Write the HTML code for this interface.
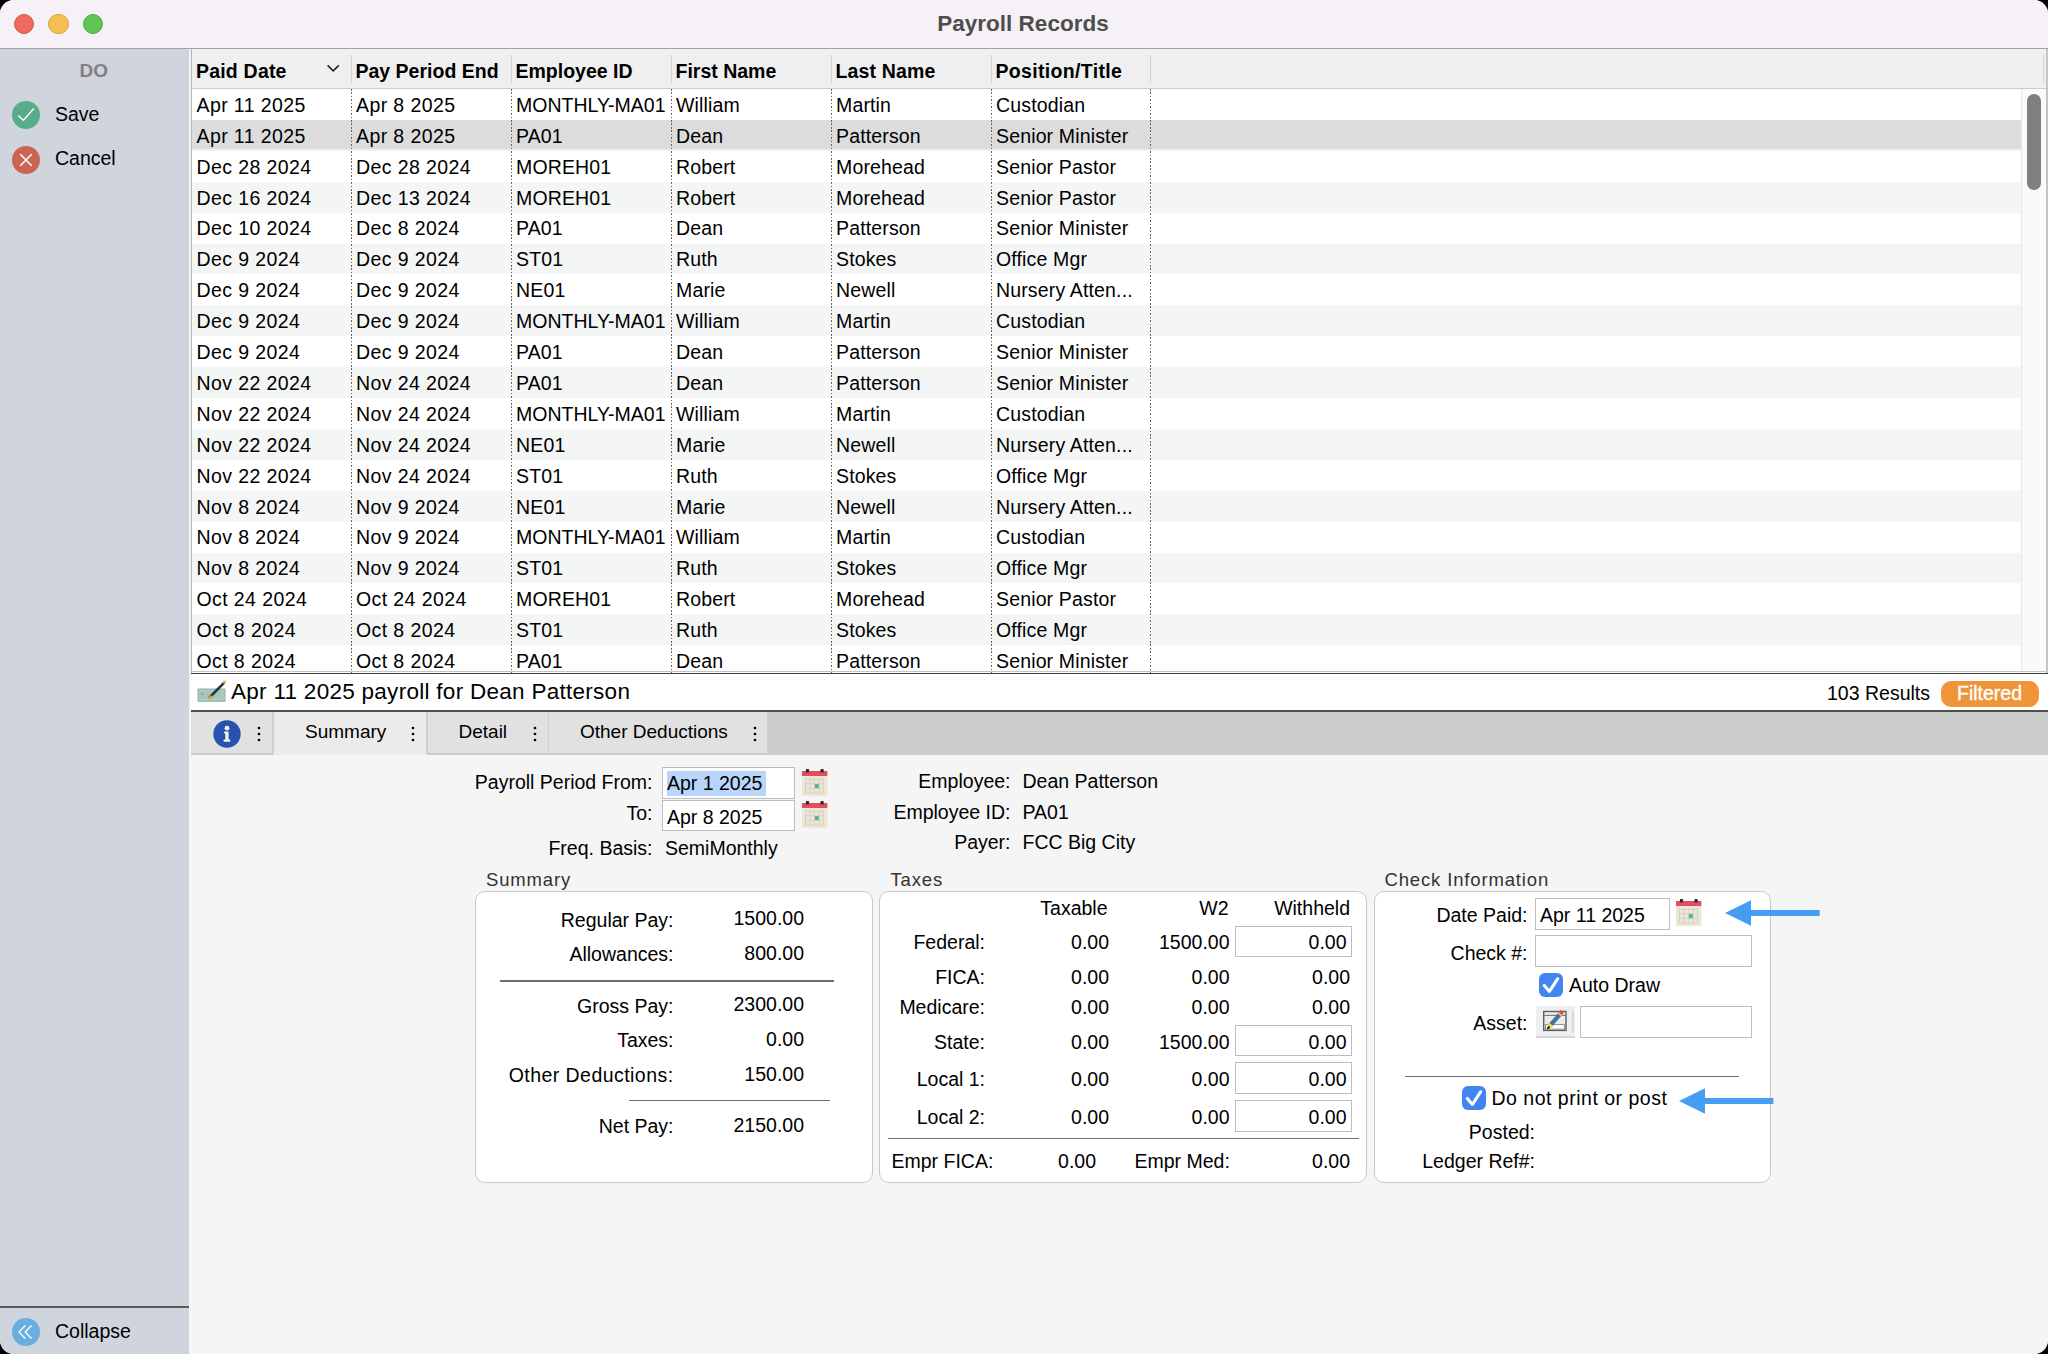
<!DOCTYPE html>
<html><head><meta charset="utf-8"><title>Payroll Records</title>
<style>
html,body{margin:0;padding:0;background:#000;width:2048px;height:1354px;overflow:hidden}
#win{position:absolute;left:0;top:0;width:2048px;height:1354px;border-radius:14px;overflow:hidden;background:#f5f5f5}
#win div,#win svg{position:absolute}
.t{font-family:"Liberation Sans", sans-serif;line-height:1;white-space:pre}
</style></head><body><div id="win">
<div style="left:0px;top:0px;width:2048px;height:48px;background:#f6f1f6"></div>
<div style="left:0px;top:47.9px;width:2048px;height:1.7px;background:#a3a3a5"></div>
<div style="left:14.0px;top:13.8px;width:18.4px;height:18.4px;border-radius:50%;background:#ee6a5f;border:1px solid #d9564b"></div>
<div style="left:48.2px;top:13.8px;width:18.4px;height:18.4px;border-radius:50%;background:#f4be50;border:1px solid #dba43b"></div>
<div style="left:82.6px;top:13.8px;width:18.4px;height:18.4px;border-radius:50%;background:#61c554;border:1px solid #4fae43"></div>
<div class="t" style="left:523px;width:1000px;text-align:center;top:13.35px;font-size:22.5px;font-weight:700;color:#4d4d4d;">Payroll Records</div>
<div style="left:0px;top:49px;width:189px;height:1305px;background:#d0d4dd"></div>
<div class="t" style="left:-406.3px;width:1000px;text-align:center;top:61.12px;font-size:19px;font-weight:700;color:#808080;">DO</div>
<svg style="left:12px;top:101px" width="28" height="28" viewBox="0 0 28 28"><circle cx="14" cy="14" r="14" fill="#57ad8a"/><path d="M6.3 14.5 L11.5 19.3 L21.8 7.5" stroke="#fff" stroke-width="1.3" fill="none"/></svg>
<div class="t" style="left:55px;top:104.59px;font-size:19.5px;font-weight:400;color:#000;">Save</div>
<svg style="left:12px;top:146px" width="28" height="28" viewBox="0 0 28 28"><circle cx="14" cy="14" r="14" fill="#cd6453"/><path d="M8.3 8.3 L19.7 19.7 M19.7 8.3 L8.3 19.7" stroke="#fff" stroke-width="1.5" fill="none"/></svg>
<div class="t" style="left:55px;top:148.79px;font-size:19.5px;font-weight:400;color:#000;">Cancel</div>
<div style="left:0px;top:1305.5px;width:189px;height:2px;background:#58595c"></div>
<svg style="left:12px;top:1317.5px" width="28" height="28" viewBox="0 0 28 28"><circle cx="14" cy="14" r="14" fill="#6aaee0"/><path d="M13.3 7.5 L7 14 L13.3 20.5 M19.5 7.5 L13.2 14 L19.5 20.5" stroke="#fff" stroke-width="1.3" fill="none"/></svg>
<div class="t" style="left:55px;top:1322.39px;font-size:19.5px;font-weight:400;color:#000;">Collapse</div>
<div style="left:189px;top:49px;width:1859px;height:1305px;background:#f5f5f5"></div>
<div style="left:191px;top:49px;width:1856px;height:624px;background:#fff"></div>
<div style="left:191px;top:49px;width:1856px;height:39px;background:#efefef"></div>
<div style="left:191px;top:88px;width:1856px;height:1px;background:#cbcbcb"></div>
<div style="left:191px;top:49px;width:1px;height:624px;background:#b5b5b5"></div>
<div style="left:2046px;top:49px;width:2px;height:624px;background:#c4c4c4"></div>
<div style="left:351px;top:55px;width:1px;height:28px;background:#d2d2d2"></div>
<div style="left:511px;top:55px;width:1px;height:28px;background:#d2d2d2"></div>
<div style="left:671px;top:55px;width:1px;height:28px;background:#d2d2d2"></div>
<div style="left:831px;top:55px;width:1px;height:28px;background:#d2d2d2"></div>
<div style="left:991px;top:55px;width:1px;height:28px;background:#d2d2d2"></div>
<div style="left:1150px;top:55px;width:1px;height:28px;background:#d2d2d2"></div>
<div style="left:2043px;top:55px;width:1px;height:28px;background:#d2d2d2"></div>
<div class="t" style="left:196px;top:61.89px;font-size:19.5px;font-weight:700;color:#000;letter-spacing:0.2px;">Paid Date</div>
<div class="t" style="left:355.5px;top:61.89px;font-size:19.5px;font-weight:700;color:#000;">Pay Period End</div>
<div class="t" style="left:515.5px;top:61.89px;font-size:19.5px;font-weight:700;color:#000;">Employee ID</div>
<div class="t" style="left:675.5px;top:61.89px;font-size:19.5px;font-weight:700;color:#000;">First Name</div>
<div class="t" style="left:835.5px;top:61.89px;font-size:19.5px;font-weight:700;color:#000;letter-spacing:0.15px;">Last Name</div>
<div class="t" style="left:995.5px;top:61.89px;font-size:19.5px;font-weight:700;color:#000;letter-spacing:0.33px;">Position/Title</div>
<svg style="left:325px;top:62px" width="16" height="12" viewBox="0 0 16 12"><path d="M2.6 3.4 L8.2 8.9 L13.8 3.4" stroke="#222" stroke-width="1.5" fill="none"/></svg>
<div class="t" style="left:196.5px;top:95.89px;font-size:19.5px;font-weight:400;color:#000;letter-spacing:0.4px;">Apr 11 2025</div>
<div class="t" style="left:356.0px;top:95.89px;font-size:19.5px;font-weight:400;color:#000;letter-spacing:0.4px;">Apr 8 2025</div>
<div class="t" style="left:516.0px;top:95.89px;font-size:19.5px;font-weight:400;color:#000;">MONTHLY-MA01</div>
<div class="t" style="left:676.0px;top:95.89px;font-size:19.5px;font-weight:400;color:#000;letter-spacing:0.15px;">William</div>
<div class="t" style="left:836.0px;top:95.89px;font-size:19.5px;font-weight:400;color:#000;letter-spacing:0.15px;">Martin</div>
<div class="t" style="left:996.0px;top:95.89px;font-size:19.5px;font-weight:400;color:#000;letter-spacing:0.15px;">Custodian</div>
<div style="left:192px;top:119.9px;width:1829px;height:28.9px;background:#dcdcdc"></div>
<div style="left:192px;top:148.8px;width:1829px;height:1.9px;background:#eff0f0"></div>
<div class="t" style="left:196.5px;top:126.79px;font-size:19.5px;font-weight:400;color:#000;letter-spacing:0.4px;">Apr 11 2025</div>
<div class="t" style="left:356.0px;top:126.79px;font-size:19.5px;font-weight:400;color:#000;letter-spacing:0.4px;">Apr 8 2025</div>
<div class="t" style="left:516.0px;top:126.79px;font-size:19.5px;font-weight:400;color:#000;letter-spacing:0.15px;">PA01</div>
<div class="t" style="left:676.0px;top:126.79px;font-size:19.5px;font-weight:400;color:#000;letter-spacing:0.15px;">Dean</div>
<div class="t" style="left:836.0px;top:126.79px;font-size:19.5px;font-weight:400;color:#000;letter-spacing:0.15px;">Patterson</div>
<div class="t" style="left:996.0px;top:126.79px;font-size:19.5px;font-weight:400;color:#000;letter-spacing:0.15px;">Senior Minister</div>
<div class="t" style="left:196.5px;top:157.69px;font-size:19.5px;font-weight:400;color:#000;letter-spacing:0.4px;">Dec 28 2024</div>
<div class="t" style="left:356.0px;top:157.69px;font-size:19.5px;font-weight:400;color:#000;letter-spacing:0.4px;">Dec 28 2024</div>
<div class="t" style="left:516.0px;top:157.69px;font-size:19.5px;font-weight:400;color:#000;letter-spacing:0.15px;">MOREH01</div>
<div class="t" style="left:676.0px;top:157.69px;font-size:19.5px;font-weight:400;color:#000;letter-spacing:0.15px;">Robert</div>
<div class="t" style="left:836.0px;top:157.69px;font-size:19.5px;font-weight:400;color:#000;letter-spacing:0.15px;">Morehead</div>
<div class="t" style="left:996.0px;top:157.69px;font-size:19.5px;font-weight:400;color:#000;letter-spacing:0.15px;">Senior Pastor</div>
<div style="left:192px;top:181.7px;width:1829px;height:30.9px;background:#f4f5f5"></div>
<div class="t" style="left:196.5px;top:188.59px;font-size:19.5px;font-weight:400;color:#000;letter-spacing:0.4px;">Dec 16 2024</div>
<div class="t" style="left:356.0px;top:188.59px;font-size:19.5px;font-weight:400;color:#000;letter-spacing:0.4px;">Dec 13 2024</div>
<div class="t" style="left:516.0px;top:188.59px;font-size:19.5px;font-weight:400;color:#000;letter-spacing:0.15px;">MOREH01</div>
<div class="t" style="left:676.0px;top:188.59px;font-size:19.5px;font-weight:400;color:#000;letter-spacing:0.15px;">Robert</div>
<div class="t" style="left:836.0px;top:188.59px;font-size:19.5px;font-weight:400;color:#000;letter-spacing:0.15px;">Morehead</div>
<div class="t" style="left:996.0px;top:188.59px;font-size:19.5px;font-weight:400;color:#000;letter-spacing:0.15px;">Senior Pastor</div>
<div class="t" style="left:196.5px;top:219.49px;font-size:19.5px;font-weight:400;color:#000;letter-spacing:0.4px;">Dec 10 2024</div>
<div class="t" style="left:356.0px;top:219.49px;font-size:19.5px;font-weight:400;color:#000;letter-spacing:0.4px;">Dec 8 2024</div>
<div class="t" style="left:516.0px;top:219.49px;font-size:19.5px;font-weight:400;color:#000;letter-spacing:0.15px;">PA01</div>
<div class="t" style="left:676.0px;top:219.49px;font-size:19.5px;font-weight:400;color:#000;letter-spacing:0.15px;">Dean</div>
<div class="t" style="left:836.0px;top:219.49px;font-size:19.5px;font-weight:400;color:#000;letter-spacing:0.15px;">Patterson</div>
<div class="t" style="left:996.0px;top:219.49px;font-size:19.5px;font-weight:400;color:#000;letter-spacing:0.15px;">Senior Minister</div>
<div style="left:192px;top:243.5px;width:1829px;height:30.9px;background:#f4f5f5"></div>
<div class="t" style="left:196.5px;top:250.39px;font-size:19.5px;font-weight:400;color:#000;letter-spacing:0.4px;">Dec 9 2024</div>
<div class="t" style="left:356.0px;top:250.39px;font-size:19.5px;font-weight:400;color:#000;letter-spacing:0.4px;">Dec 9 2024</div>
<div class="t" style="left:516.0px;top:250.39px;font-size:19.5px;font-weight:400;color:#000;letter-spacing:0.15px;">ST01</div>
<div class="t" style="left:676.0px;top:250.39px;font-size:19.5px;font-weight:400;color:#000;letter-spacing:0.15px;">Ruth</div>
<div class="t" style="left:836.0px;top:250.39px;font-size:19.5px;font-weight:400;color:#000;letter-spacing:0.15px;">Stokes</div>
<div class="t" style="left:996.0px;top:250.39px;font-size:19.5px;font-weight:400;color:#000;letter-spacing:0.15px;">Office Mgr</div>
<div class="t" style="left:196.5px;top:281.29px;font-size:19.5px;font-weight:400;color:#000;letter-spacing:0.4px;">Dec 9 2024</div>
<div class="t" style="left:356.0px;top:281.29px;font-size:19.5px;font-weight:400;color:#000;letter-spacing:0.4px;">Dec 9 2024</div>
<div class="t" style="left:516.0px;top:281.29px;font-size:19.5px;font-weight:400;color:#000;letter-spacing:0.15px;">NE01</div>
<div class="t" style="left:676.0px;top:281.29px;font-size:19.5px;font-weight:400;color:#000;letter-spacing:0.15px;">Marie</div>
<div class="t" style="left:836.0px;top:281.29px;font-size:19.5px;font-weight:400;color:#000;letter-spacing:0.15px;">Newell</div>
<div class="t" style="left:996.0px;top:281.29px;font-size:19.5px;font-weight:400;color:#000;letter-spacing:0.15px;">Nursery Atten...</div>
<div style="left:192px;top:305.3px;width:1829px;height:30.9px;background:#f4f5f5"></div>
<div class="t" style="left:196.5px;top:312.19px;font-size:19.5px;font-weight:400;color:#000;letter-spacing:0.4px;">Dec 9 2024</div>
<div class="t" style="left:356.0px;top:312.19px;font-size:19.5px;font-weight:400;color:#000;letter-spacing:0.4px;">Dec 9 2024</div>
<div class="t" style="left:516.0px;top:312.19px;font-size:19.5px;font-weight:400;color:#000;">MONTHLY-MA01</div>
<div class="t" style="left:676.0px;top:312.19px;font-size:19.5px;font-weight:400;color:#000;letter-spacing:0.15px;">William</div>
<div class="t" style="left:836.0px;top:312.19px;font-size:19.5px;font-weight:400;color:#000;letter-spacing:0.15px;">Martin</div>
<div class="t" style="left:996.0px;top:312.19px;font-size:19.5px;font-weight:400;color:#000;letter-spacing:0.15px;">Custodian</div>
<div class="t" style="left:196.5px;top:343.09px;font-size:19.5px;font-weight:400;color:#000;letter-spacing:0.4px;">Dec 9 2024</div>
<div class="t" style="left:356.0px;top:343.09px;font-size:19.5px;font-weight:400;color:#000;letter-spacing:0.4px;">Dec 9 2024</div>
<div class="t" style="left:516.0px;top:343.09px;font-size:19.5px;font-weight:400;color:#000;letter-spacing:0.15px;">PA01</div>
<div class="t" style="left:676.0px;top:343.09px;font-size:19.5px;font-weight:400;color:#000;letter-spacing:0.15px;">Dean</div>
<div class="t" style="left:836.0px;top:343.09px;font-size:19.5px;font-weight:400;color:#000;letter-spacing:0.15px;">Patterson</div>
<div class="t" style="left:996.0px;top:343.09px;font-size:19.5px;font-weight:400;color:#000;letter-spacing:0.15px;">Senior Minister</div>
<div style="left:192px;top:367.1px;width:1829px;height:30.9px;background:#f4f5f5"></div>
<div class="t" style="left:196.5px;top:373.99px;font-size:19.5px;font-weight:400;color:#000;letter-spacing:0.4px;">Nov 22 2024</div>
<div class="t" style="left:356.0px;top:373.99px;font-size:19.5px;font-weight:400;color:#000;letter-spacing:0.4px;">Nov 24 2024</div>
<div class="t" style="left:516.0px;top:373.99px;font-size:19.5px;font-weight:400;color:#000;letter-spacing:0.15px;">PA01</div>
<div class="t" style="left:676.0px;top:373.99px;font-size:19.5px;font-weight:400;color:#000;letter-spacing:0.15px;">Dean</div>
<div class="t" style="left:836.0px;top:373.99px;font-size:19.5px;font-weight:400;color:#000;letter-spacing:0.15px;">Patterson</div>
<div class="t" style="left:996.0px;top:373.99px;font-size:19.5px;font-weight:400;color:#000;letter-spacing:0.15px;">Senior Minister</div>
<div class="t" style="left:196.5px;top:404.89px;font-size:19.5px;font-weight:400;color:#000;letter-spacing:0.4px;">Nov 22 2024</div>
<div class="t" style="left:356.0px;top:404.89px;font-size:19.5px;font-weight:400;color:#000;letter-spacing:0.4px;">Nov 24 2024</div>
<div class="t" style="left:516.0px;top:404.89px;font-size:19.5px;font-weight:400;color:#000;">MONTHLY-MA01</div>
<div class="t" style="left:676.0px;top:404.89px;font-size:19.5px;font-weight:400;color:#000;letter-spacing:0.15px;">William</div>
<div class="t" style="left:836.0px;top:404.89px;font-size:19.5px;font-weight:400;color:#000;letter-spacing:0.15px;">Martin</div>
<div class="t" style="left:996.0px;top:404.89px;font-size:19.5px;font-weight:400;color:#000;letter-spacing:0.15px;">Custodian</div>
<div style="left:192px;top:428.9px;width:1829px;height:30.9px;background:#f4f5f5"></div>
<div class="t" style="left:196.5px;top:435.79px;font-size:19.5px;font-weight:400;color:#000;letter-spacing:0.4px;">Nov 22 2024</div>
<div class="t" style="left:356.0px;top:435.79px;font-size:19.5px;font-weight:400;color:#000;letter-spacing:0.4px;">Nov 24 2024</div>
<div class="t" style="left:516.0px;top:435.79px;font-size:19.5px;font-weight:400;color:#000;letter-spacing:0.15px;">NE01</div>
<div class="t" style="left:676.0px;top:435.79px;font-size:19.5px;font-weight:400;color:#000;letter-spacing:0.15px;">Marie</div>
<div class="t" style="left:836.0px;top:435.79px;font-size:19.5px;font-weight:400;color:#000;letter-spacing:0.15px;">Newell</div>
<div class="t" style="left:996.0px;top:435.79px;font-size:19.5px;font-weight:400;color:#000;letter-spacing:0.15px;">Nursery Atten...</div>
<div class="t" style="left:196.5px;top:466.69px;font-size:19.5px;font-weight:400;color:#000;letter-spacing:0.4px;">Nov 22 2024</div>
<div class="t" style="left:356.0px;top:466.69px;font-size:19.5px;font-weight:400;color:#000;letter-spacing:0.4px;">Nov 24 2024</div>
<div class="t" style="left:516.0px;top:466.69px;font-size:19.5px;font-weight:400;color:#000;letter-spacing:0.15px;">ST01</div>
<div class="t" style="left:676.0px;top:466.69px;font-size:19.5px;font-weight:400;color:#000;letter-spacing:0.15px;">Ruth</div>
<div class="t" style="left:836.0px;top:466.69px;font-size:19.5px;font-weight:400;color:#000;letter-spacing:0.15px;">Stokes</div>
<div class="t" style="left:996.0px;top:466.69px;font-size:19.5px;font-weight:400;color:#000;letter-spacing:0.15px;">Office Mgr</div>
<div style="left:192px;top:490.7px;width:1829px;height:30.9px;background:#f4f5f5"></div>
<div class="t" style="left:196.5px;top:497.59px;font-size:19.5px;font-weight:400;color:#000;letter-spacing:0.4px;">Nov 8 2024</div>
<div class="t" style="left:356.0px;top:497.59px;font-size:19.5px;font-weight:400;color:#000;letter-spacing:0.4px;">Nov 9 2024</div>
<div class="t" style="left:516.0px;top:497.59px;font-size:19.5px;font-weight:400;color:#000;letter-spacing:0.15px;">NE01</div>
<div class="t" style="left:676.0px;top:497.59px;font-size:19.5px;font-weight:400;color:#000;letter-spacing:0.15px;">Marie</div>
<div class="t" style="left:836.0px;top:497.59px;font-size:19.5px;font-weight:400;color:#000;letter-spacing:0.15px;">Newell</div>
<div class="t" style="left:996.0px;top:497.59px;font-size:19.5px;font-weight:400;color:#000;letter-spacing:0.15px;">Nursery Atten...</div>
<div class="t" style="left:196.5px;top:528.49px;font-size:19.5px;font-weight:400;color:#000;letter-spacing:0.4px;">Nov 8 2024</div>
<div class="t" style="left:356.0px;top:528.49px;font-size:19.5px;font-weight:400;color:#000;letter-spacing:0.4px;">Nov 9 2024</div>
<div class="t" style="left:516.0px;top:528.49px;font-size:19.5px;font-weight:400;color:#000;">MONTHLY-MA01</div>
<div class="t" style="left:676.0px;top:528.49px;font-size:19.5px;font-weight:400;color:#000;letter-spacing:0.15px;">William</div>
<div class="t" style="left:836.0px;top:528.49px;font-size:19.5px;font-weight:400;color:#000;letter-spacing:0.15px;">Martin</div>
<div class="t" style="left:996.0px;top:528.49px;font-size:19.5px;font-weight:400;color:#000;letter-spacing:0.15px;">Custodian</div>
<div style="left:192px;top:552.5px;width:1829px;height:30.9px;background:#f4f5f5"></div>
<div class="t" style="left:196.5px;top:559.39px;font-size:19.5px;font-weight:400;color:#000;letter-spacing:0.4px;">Nov 8 2024</div>
<div class="t" style="left:356.0px;top:559.39px;font-size:19.5px;font-weight:400;color:#000;letter-spacing:0.4px;">Nov 9 2024</div>
<div class="t" style="left:516.0px;top:559.39px;font-size:19.5px;font-weight:400;color:#000;letter-spacing:0.15px;">ST01</div>
<div class="t" style="left:676.0px;top:559.39px;font-size:19.5px;font-weight:400;color:#000;letter-spacing:0.15px;">Ruth</div>
<div class="t" style="left:836.0px;top:559.39px;font-size:19.5px;font-weight:400;color:#000;letter-spacing:0.15px;">Stokes</div>
<div class="t" style="left:996.0px;top:559.39px;font-size:19.5px;font-weight:400;color:#000;letter-spacing:0.15px;">Office Mgr</div>
<div class="t" style="left:196.5px;top:590.29px;font-size:19.5px;font-weight:400;color:#000;letter-spacing:0.4px;">Oct 24 2024</div>
<div class="t" style="left:356.0px;top:590.29px;font-size:19.5px;font-weight:400;color:#000;letter-spacing:0.4px;">Oct 24 2024</div>
<div class="t" style="left:516.0px;top:590.29px;font-size:19.5px;font-weight:400;color:#000;letter-spacing:0.15px;">MOREH01</div>
<div class="t" style="left:676.0px;top:590.29px;font-size:19.5px;font-weight:400;color:#000;letter-spacing:0.15px;">Robert</div>
<div class="t" style="left:836.0px;top:590.29px;font-size:19.5px;font-weight:400;color:#000;letter-spacing:0.15px;">Morehead</div>
<div class="t" style="left:996.0px;top:590.29px;font-size:19.5px;font-weight:400;color:#000;letter-spacing:0.15px;">Senior Pastor</div>
<div style="left:192px;top:614.3px;width:1829px;height:30.9px;background:#f4f5f5"></div>
<div class="t" style="left:196.5px;top:621.19px;font-size:19.5px;font-weight:400;color:#000;letter-spacing:0.4px;">Oct 8 2024</div>
<div class="t" style="left:356.0px;top:621.19px;font-size:19.5px;font-weight:400;color:#000;letter-spacing:0.4px;">Oct 8 2024</div>
<div class="t" style="left:516.0px;top:621.19px;font-size:19.5px;font-weight:400;color:#000;letter-spacing:0.15px;">ST01</div>
<div class="t" style="left:676.0px;top:621.19px;font-size:19.5px;font-weight:400;color:#000;letter-spacing:0.15px;">Ruth</div>
<div class="t" style="left:836.0px;top:621.19px;font-size:19.5px;font-weight:400;color:#000;letter-spacing:0.15px;">Stokes</div>
<div class="t" style="left:996.0px;top:621.19px;font-size:19.5px;font-weight:400;color:#000;letter-spacing:0.15px;">Office Mgr</div>
<div class="t" style="left:196.5px;top:652.09px;font-size:19.5px;font-weight:400;color:#000;letter-spacing:0.4px;">Oct 8 2024</div>
<div class="t" style="left:356.0px;top:652.09px;font-size:19.5px;font-weight:400;color:#000;letter-spacing:0.4px;">Oct 8 2024</div>
<div class="t" style="left:516.0px;top:652.09px;font-size:19.5px;font-weight:400;color:#000;letter-spacing:0.15px;">PA01</div>
<div class="t" style="left:676.0px;top:652.09px;font-size:19.5px;font-weight:400;color:#000;letter-spacing:0.15px;">Dean</div>
<div class="t" style="left:836.0px;top:652.09px;font-size:19.5px;font-weight:400;color:#000;letter-spacing:0.15px;">Patterson</div>
<div class="t" style="left:996.0px;top:652.09px;font-size:19.5px;font-weight:400;color:#000;letter-spacing:0.15px;">Senior Minister</div>
<div style="left:351px;top:89px;width:1px;height:584px;background:repeating-linear-gradient(#666 0 1.6px, transparent 1.6px 3.45px)"></div>
<div style="left:511px;top:89px;width:1px;height:584px;background:repeating-linear-gradient(#666 0 1.6px, transparent 1.6px 3.45px)"></div>
<div style="left:671px;top:89px;width:1px;height:584px;background:repeating-linear-gradient(#666 0 1.6px, transparent 1.6px 3.45px)"></div>
<div style="left:831px;top:89px;width:1px;height:584px;background:repeating-linear-gradient(#666 0 1.6px, transparent 1.6px 3.45px)"></div>
<div style="left:991px;top:89px;width:1px;height:584px;background:repeating-linear-gradient(#666 0 1.6px, transparent 1.6px 3.45px)"></div>
<div style="left:1150px;top:89px;width:1px;height:584px;background:repeating-linear-gradient(#666 0 1.6px, transparent 1.6px 3.45px)"></div>
<div style="left:2021px;top:89px;width:25px;height:584px;background:#fafafa"></div>
<div style="left:2021px;top:89px;width:1px;height:584px;background:#e6e6e6"></div>
<div style="left:2027px;top:94px;width:14px;height:96px;background:#7f7f7f;border-radius:7px"></div>
<div style="left:191px;top:671.3px;width:1857px;height:1.2px;background:#c4c4c4"></div>
<div style="left:191px;top:672.5px;width:1857px;height:1.7px;background:#3c3c3c"></div>
<div style="left:191px;top:674px;width:1857px;height:36.5px;background:#fff"></div>
<div style="left:191px;top:710.2px;width:1857px;height:1.5px;background:#4e4e4e"></div>
<svg style="left:196px;top:680px" width="32" height="24" viewBox="0 0 32 24"><rect x="2" y="9" width="27" height="12.3" fill="#a9c5b7" stroke="#94b4a4" stroke-width="1"/><rect x="4" y="11" width="23" height="8.3" fill="none" stroke="#bcd3c8" stroke-width="0.8"/><circle cx="6" cy="14" r="1.6" fill="#8fb0a0"/><path d="M13.5 17.5 L28 2.8" stroke="#1d3848" stroke-width="2.6" stroke-linecap="round"/><path d="M13 18.4 L15 16.5" stroke="#e2a823" stroke-width="2.4" stroke-linecap="round"/><path d="M28 2.6 L29.3 1.6" stroke="#e9b52a" stroke-width="2" stroke-linecap="round"/></svg>
<div class="t" style="left:231px;top:681.25px;font-size:22.5px;font-weight:400;color:#000;letter-spacing:0.28px;">Apr 11 2025 payroll for Dean Patterson</div>
<div class="t" style="right:118px;text-align:right;top:684.19px;font-size:19.5px;font-weight:400;color:#000;">103 Results</div>
<div style="left:1941.3px;top:681.4px;width:97.6px;height:25.6px;background:#f0943a;border-radius:10px"></div>
<div class="t" style="left:1489.5px;width:1000px;text-align:center;top:684.39px;font-size:19.5px;font-weight:400;color:#fff;-webkit-text-stroke:0.35px #fff;">Filtered</div>
<div style="left:191px;top:711.7px;width:1857px;height:43.3px;background:#cdcdcd"></div>
<div style="left:191px;top:711.7px;width:83px;height:43.3px;background:#e1e1e1;border-right:2px solid #cfcfcf;border-bottom:2px solid #cbcbcb;box-sizing:border-box"></div>
<svg style="left:213px;top:720px" width="28" height="28" viewBox="0 0 28 28"><circle cx="14" cy="14" r="13.7" fill="#2952b0"/><circle cx="14" cy="8.2" r="2.4" fill="#f4f2ea"/><path d="M11.2 11.4 H15.6 V19.4 H17.3 V21.7 H10.6 V19.4 H12.3 V13.6 H11.2 Z" fill="#f4f2ea"/></svg>
<svg style="left:257.4px;top:725.6px" width="4" height="4" viewBox="0 0 4 4"><circle cx="2" cy="2" r="1.35" fill="#000"/></svg>
<svg style="left:257.4px;top:731.9px" width="4" height="4" viewBox="0 0 4 4"><circle cx="2" cy="2" r="1.35" fill="#000"/></svg>
<svg style="left:257.4px;top:738.1px" width="4" height="4" viewBox="0 0 4 4"><circle cx="2" cy="2" r="1.35" fill="#000"/></svg>
<div style="left:274px;top:711.7px;width:152.5px;height:43.3px;background:#ebebeb"></div>
<div class="t" style="left:305px;top:722.32px;font-size:19px;font-weight:400;color:#000;">Summary</div>
<svg style="left:411.1px;top:725.6px" width="4" height="4" viewBox="0 0 4 4"><circle cx="2" cy="2" r="1.35" fill="#000"/></svg>
<svg style="left:411.1px;top:731.9px" width="4" height="4" viewBox="0 0 4 4"><circle cx="2" cy="2" r="1.35" fill="#000"/></svg>
<svg style="left:411.1px;top:738.1px" width="4" height="4" viewBox="0 0 4 4"><circle cx="2" cy="2" r="1.35" fill="#000"/></svg>
<div style="left:426.2px;top:711.7px;width:121.5px;height:43.3px;background:#e1e1e1;border-left:2px solid #cfcfcf;border-bottom:2px solid #cbcbcb;border-bottom-left-radius:4px;box-sizing:border-box"></div>
<div class="t" style="left:458.5px;top:722.32px;font-size:19px;font-weight:400;color:#000;">Detail</div>
<svg style="left:532.5px;top:725.6px" width="4" height="4" viewBox="0 0 4 4"><circle cx="2" cy="2" r="1.35" fill="#000"/></svg>
<svg style="left:532.5px;top:731.9px" width="4" height="4" viewBox="0 0 4 4"><circle cx="2" cy="2" r="1.35" fill="#000"/></svg>
<svg style="left:532.5px;top:738.1px" width="4" height="4" viewBox="0 0 4 4"><circle cx="2" cy="2" r="1.35" fill="#000"/></svg>
<div style="left:547.7px;top:711.7px;width:219.5px;height:43.3px;background:#e1e1e1;border-left:1.5px solid #cfcfcf;border-bottom:2px solid #cbcbcb;box-sizing:border-box"></div>
<div class="t" style="left:580px;top:722.32px;font-size:19px;font-weight:400;color:#000;">Other Deductions</div>
<svg style="left:752.5px;top:725.6px" width="4" height="4" viewBox="0 0 4 4"><circle cx="2" cy="2" r="1.35" fill="#000"/></svg>
<svg style="left:752.5px;top:731.9px" width="4" height="4" viewBox="0 0 4 4"><circle cx="2" cy="2" r="1.35" fill="#000"/></svg>
<svg style="left:752.5px;top:738.1px" width="4" height="4" viewBox="0 0 4 4"><circle cx="2" cy="2" r="1.35" fill="#000"/></svg>
<div class="t" style="right:1395.5px;text-align:right;top:773.39px;font-size:19.5px;font-weight:400;color:#000;">Payroll Period From:</div>
<div class="t" style="right:1395.5px;text-align:right;top:803.89px;font-size:19.5px;font-weight:400;color:#000;">To:</div>
<div class="t" style="right:1395.5px;text-align:right;top:838.69px;font-size:19.5px;font-weight:400;color:#000;">Freq. Basis:</div>
<div style="left:662px;top:767.4px;width:133.3px;height:32px;background:#fff;border:1px solid #bdbdbd;box-sizing:border-box"></div>
<div style="left:662px;top:799.9px;width:133.3px;height:31.5px;background:#fff;border:1px solid #bdbdbd;box-sizing:border-box"></div>
<div style="left:667px;top:770.8px;width:99.2px;height:24.8px;background:#b9d5fa"></div>
<div class="t" style="left:667px;top:773.79px;font-size:19.5px;font-weight:400;color:#000;">Apr 1 2025</div>
<div class="t" style="left:667px;top:807.59px;font-size:19.5px;font-weight:400;color:#000;">Apr 8 2025</div>
<div class="t" style="left:665px;top:838.69px;font-size:19.5px;font-weight:400;color:#000;">SemiMonthly</div>
<svg style="left:801.7px;top:769.2px" width="26" height="28" viewBox="0 0 26 28"><rect x="0" y="7" width="25.4" height="20" fill="#ebe8da"/><rect x="0" y="2" width="25.4" height="5" fill="#e84b5b"/><rect x="3.9" y="0" width="3.2" height="3.5" rx="0.8" fill="#1e2c3e"/><rect x="18.5" y="0" width="3.2" height="3.5" rx="0.8" fill="#1e2c3e"/><g stroke="#d6d0b9" stroke-width="0.9" fill="none"><rect x="3.6" y="10.2" width="18" height="13.9"/><path d="M8.1 10.2V24.1M12.6 10.2V24.1M17.1 10.2V24.1M3.6 14.8H21.6M3.6 19.4H21.6"/></g><rect x="12.9" y="15.1" width="3.9" height="4" fill="#48b793"/></svg>
<svg style="left:801.7px;top:800.8px" width="26" height="28" viewBox="0 0 26 28"><rect x="0" y="7" width="25.4" height="20" fill="#ebe8da"/><rect x="0" y="2" width="25.4" height="5" fill="#e84b5b"/><rect x="3.9" y="0" width="3.2" height="3.5" rx="0.8" fill="#1e2c3e"/><rect x="18.5" y="0" width="3.2" height="3.5" rx="0.8" fill="#1e2c3e"/><g stroke="#d6d0b9" stroke-width="0.9" fill="none"><rect x="3.6" y="10.2" width="18" height="13.9"/><path d="M8.1 10.2V24.1M12.6 10.2V24.1M17.1 10.2V24.1M3.6 14.8H21.6M3.6 19.4H21.6"/></g><rect x="12.9" y="15.1" width="3.9" height="4" fill="#48b793"/></svg>
<div class="t" style="right:1037.5px;text-align:right;top:771.59px;font-size:19.5px;font-weight:400;color:#000;">Employee:</div>
<div class="t" style="right:1037.5px;text-align:right;top:802.69px;font-size:19.5px;font-weight:400;color:#000;">Employee ID:</div>
<div class="t" style="right:1037.5px;text-align:right;top:832.99px;font-size:19.5px;font-weight:400;color:#000;">Payer:</div>
<div class="t" style="left:1022.5px;top:771.59px;font-size:19.5px;font-weight:400;color:#000;">Dean Patterson</div>
<div class="t" style="left:1022.5px;top:802.69px;font-size:19.5px;font-weight:400;color:#000;">PA01</div>
<div class="t" style="left:1022.5px;top:832.99px;font-size:19.5px;font-weight:400;color:#000;">FCC Big City</div>
<div class="t" style="left:486px;top:870.64px;font-size:18.5px;font-weight:400;color:#333;letter-spacing:0.85px;">Summary</div>
<div style="left:474.5px;top:891px;width:398px;height:292px;background:#fff;border:1.5px solid #c9c9c9;border-radius:10px;box-sizing:border-box"></div>
<div class="t" style="left:890.5px;top:870.64px;font-size:18.5px;font-weight:400;color:#333;letter-spacing:0.85px;">Taxes</div>
<div style="left:878.8px;top:891.4px;width:488.6px;height:292px;background:#fff;border:1.5px solid #c9c9c9;border-radius:10px;box-sizing:border-box"></div>
<div class="t" style="left:1384.5px;top:870.64px;font-size:18.5px;font-weight:400;color:#333;letter-spacing:0.85px;">Check Information</div>
<div style="left:1373.8px;top:891.4px;width:397.3px;height:292px;background:#fff;border:1.5px solid #c9c9c9;border-radius:10px;box-sizing:border-box"></div>
<div class="t" style="right:1374.5px;text-align:right;top:910.79px;font-size:19.5px;font-weight:400;color:#000;">Regular Pay:</div>
<div class="t" style="right:1244px;text-align:right;top:909.29px;font-size:19.5px;font-weight:400;color:#000;">1500.00</div>
<div class="t" style="right:1374.5px;text-align:right;top:945.09px;font-size:19.5px;font-weight:400;color:#000;">Allowances:</div>
<div class="t" style="right:1244px;text-align:right;top:943.59px;font-size:19.5px;font-weight:400;color:#000;">800.00</div>
<div class="t" style="right:1374.5px;text-align:right;top:996.59px;font-size:19.5px;font-weight:400;color:#000;">Gross Pay:</div>
<div class="t" style="right:1244px;text-align:right;top:995.09px;font-size:19.5px;font-weight:400;color:#000;">2300.00</div>
<div class="t" style="right:1374.5px;text-align:right;top:1031.09px;font-size:19.5px;font-weight:400;color:#000;">Taxes:</div>
<div class="t" style="right:1244px;text-align:right;top:1029.59px;font-size:19.5px;font-weight:400;color:#000;">0.00</div>
<div class="t" style="right:1374.5px;text-align:right;top:1066.29px;font-size:19.5px;font-weight:400;color:#000;letter-spacing:0.45px;">Other Deductions:</div>
<div class="t" style="right:1244px;text-align:right;top:1064.79px;font-size:19.5px;font-weight:400;color:#000;">150.00</div>
<div class="t" style="right:1374.5px;text-align:right;top:1117.29px;font-size:19.5px;font-weight:400;color:#000;">Net Pay:</div>
<div class="t" style="right:1244px;text-align:right;top:1115.79px;font-size:19.5px;font-weight:400;color:#000;">2150.00</div>
<div style="left:500px;top:979.8px;width:333.5px;height:1.8px;background:#6f6f6f"></div>
<div style="left:629px;top:1099.6px;width:201px;height:1.8px;background:#6f6f6f"></div>
<div class="t" style="right:940.5px;text-align:right;top:898.79px;font-size:19.5px;font-weight:400;color:#000;">Taxable</div>
<div class="t" style="right:819.5px;text-align:right;top:898.79px;font-size:19.5px;font-weight:400;color:#000;">W2</div>
<div class="t" style="right:698px;text-align:right;top:898.79px;font-size:19.5px;font-weight:400;color:#000;">Withheld</div>
<div class="t" style="right:1063px;text-align:right;top:933.29px;font-size:19.5px;font-weight:400;color:#000;">Federal:</div>
<div class="t" style="right:939px;text-align:right;top:933.29px;font-size:19.5px;font-weight:400;color:#000;">0.00</div>
<div class="t" style="right:818.5px;text-align:right;top:933.29px;font-size:19.5px;font-weight:400;color:#000;">1500.00</div>
<div style="left:1235.4px;top:925.8px;width:116.3px;height:31.5px;background:#fff;border:1px solid #bdbdbd;box-sizing:border-box"></div>
<div class="t" style="right:701.5px;text-align:right;top:933.29px;font-size:19.5px;font-weight:400;color:#000;">0.00</div>
<div class="t" style="right:1063px;text-align:right;top:967.69px;font-size:19.5px;font-weight:400;color:#000;">FICA:</div>
<div class="t" style="right:939px;text-align:right;top:967.69px;font-size:19.5px;font-weight:400;color:#000;">0.00</div>
<div class="t" style="right:818.5px;text-align:right;top:967.69px;font-size:19.5px;font-weight:400;color:#000;">0.00</div>
<div class="t" style="right:698px;text-align:right;top:967.69px;font-size:19.5px;font-weight:400;color:#000;">0.00</div>
<div class="t" style="right:1063px;text-align:right;top:998.09px;font-size:19.5px;font-weight:400;color:#000;">Medicare:</div>
<div class="t" style="right:939px;text-align:right;top:998.09px;font-size:19.5px;font-weight:400;color:#000;">0.00</div>
<div class="t" style="right:818.5px;text-align:right;top:998.09px;font-size:19.5px;font-weight:400;color:#000;">0.00</div>
<div class="t" style="right:698px;text-align:right;top:998.09px;font-size:19.5px;font-weight:400;color:#000;">0.00</div>
<div class="t" style="right:1063px;text-align:right;top:1033.09px;font-size:19.5px;font-weight:400;color:#000;">State:</div>
<div class="t" style="right:939px;text-align:right;top:1033.09px;font-size:19.5px;font-weight:400;color:#000;">0.00</div>
<div class="t" style="right:818.5px;text-align:right;top:1033.09px;font-size:19.5px;font-weight:400;color:#000;">1500.00</div>
<div style="left:1235.4px;top:1024.5px;width:116.3px;height:31.5px;background:#fff;border:1px solid #bdbdbd;box-sizing:border-box"></div>
<div class="t" style="right:701.5px;text-align:right;top:1033.09px;font-size:19.5px;font-weight:400;color:#000;">0.00</div>
<div class="t" style="right:1063px;text-align:right;top:1070.09px;font-size:19.5px;font-weight:400;color:#000;">Local 1:</div>
<div class="t" style="right:939px;text-align:right;top:1070.09px;font-size:19.5px;font-weight:400;color:#000;">0.00</div>
<div class="t" style="right:818.5px;text-align:right;top:1070.09px;font-size:19.5px;font-weight:400;color:#000;">0.00</div>
<div style="left:1235.4px;top:1062.2px;width:116.3px;height:31.5px;background:#fff;border:1px solid #bdbdbd;box-sizing:border-box"></div>
<div class="t" style="right:701.5px;text-align:right;top:1070.09px;font-size:19.5px;font-weight:400;color:#000;">0.00</div>
<div class="t" style="right:1063px;text-align:right;top:1108.29px;font-size:19.5px;font-weight:400;color:#000;">Local 2:</div>
<div class="t" style="right:939px;text-align:right;top:1108.29px;font-size:19.5px;font-weight:400;color:#000;">0.00</div>
<div class="t" style="right:818.5px;text-align:right;top:1108.29px;font-size:19.5px;font-weight:400;color:#000;">0.00</div>
<div style="left:1235.4px;top:1100.3px;width:116.3px;height:31.5px;background:#fff;border:1px solid #bdbdbd;box-sizing:border-box"></div>
<div class="t" style="right:701.5px;text-align:right;top:1108.29px;font-size:19.5px;font-weight:400;color:#000;">0.00</div>
<div style="left:888px;top:1137.5px;width:471.2px;height:1.8px;background:#6f6f6f"></div>
<div class="t" style="left:891.5px;top:1152.49px;font-size:19.5px;font-weight:400;color:#000;">Empr FICA:</div>
<div class="t" style="right:952px;text-align:right;top:1152.49px;font-size:19.5px;font-weight:400;color:#000;">0.00</div>
<div class="t" style="left:1134.5px;top:1152.49px;font-size:19.5px;font-weight:400;color:#000;">Empr Med:</div>
<div class="t" style="right:698px;text-align:right;top:1152.49px;font-size:19.5px;font-weight:400;color:#000;">0.00</div>
<div class="t" style="right:520.5px;text-align:right;top:905.59px;font-size:19.5px;font-weight:400;color:#000;">Date Paid:</div>
<div style="left:1534.5px;top:897.5px;width:135.1px;height:32.2px;background:#fff;border:1px solid #bdbdbd;box-sizing:border-box"></div>
<div class="t" style="left:1540px;top:905.59px;font-size:19.5px;font-weight:400;color:#000;">Apr 11 2025</div>
<svg style="left:1675.8px;top:898.9px" width="26" height="28" viewBox="0 0 26 28"><rect x="0" y="7" width="25.4" height="20" fill="#ebe8da"/><rect x="0" y="2" width="25.4" height="5" fill="#e84b5b"/><rect x="3.9" y="0" width="3.2" height="3.5" rx="0.8" fill="#1e2c3e"/><rect x="18.5" y="0" width="3.2" height="3.5" rx="0.8" fill="#1e2c3e"/><g stroke="#d6d0b9" stroke-width="0.9" fill="none"><rect x="3.6" y="10.2" width="18" height="13.9"/><path d="M8.1 10.2V24.1M12.6 10.2V24.1M17.1 10.2V24.1M3.6 14.8H21.6M3.6 19.4H21.6"/></g><rect x="12.9" y="15.1" width="3.9" height="4" fill="#48b793"/></svg>
<div class="t" style="right:520.5px;text-align:right;top:943.79px;font-size:19.5px;font-weight:400;color:#000;">Check #:</div>
<div style="left:1534.5px;top:935.3px;width:217.7px;height:32.2px;background:#fff;border:1px solid #bdbdbd;box-sizing:border-box"></div>
<svg style="left:1539.2px;top:973px" width="24" height="24" viewBox="0 0 24 24"><rect x="0" y="0" width="24" height="24" rx="6" fill="#4185f3"/><path d="M5.3 12.5 L10.4 18.4 L18.6 5.8" stroke="#fff" stroke-width="3.1" stroke-linecap="round" stroke-linejoin="round" fill="none"/></svg>
<div class="t" style="left:1569px;top:975.89px;font-size:19.5px;font-weight:400;color:#000;">Auto Draw</div>
<div class="t" style="right:520.5px;text-align:right;top:1014.29px;font-size:19.5px;font-weight:400;color:#000;">Asset:</div>
<div style="left:1536px;top:1005.7px;width:39px;height:32px;background:#efefef;border-bottom:2px solid #d6d6d6;box-sizing:border-box"></div>
<svg style="left:1541px;top:1008px" width="34" height="28" viewBox="0 0 34 28"><rect x="2.7" y="3.5" width="22.3" height="18.9" fill="#ececec" stroke="#5e5e5e" stroke-width="1.4"/><path d="M2.7 7.4 H25" stroke="#777" stroke-width="1.1"/><rect x="4.5" y="16.6" width="19" height="4.5" fill="#fff" stroke="#888" stroke-width="0.9"/><path d="M9.3 17.4 L18.6 6.6" stroke="#46709f" stroke-width="4.3"/><path d="M7.9 19.1 L10.2 16.4" stroke="#f1dc45" stroke-width="4.3"/><path d="M7 20.2 L7.9 19.1" stroke="#222" stroke-width="2.2" stroke-linecap="round"/><path d="M18.4 6.8 L19.3 5.7" stroke="#f3e36a" stroke-width="4.3"/><path d="M19.2 5.8 L21.4 3.1" stroke="#e8502e" stroke-width="4.3"/><path d="M31.9 3 V25" stroke="#d2d2d2" stroke-width="1.5"/></svg>
<div style="left:1580.4px;top:1005.7px;width:171.8px;height:32.1px;background:#fff;border:1px solid #bdbdbd;box-sizing:border-box"></div>
<div style="left:1405.2px;top:1075.5px;width:334px;height:1.8px;background:#6f6f6f"></div>
<svg style="left:1462.1px;top:1086.1px" width="24" height="24" viewBox="0 0 24 24"><rect x="0" y="0" width="24" height="24" rx="6" fill="#4185f3"/><path d="M5.3 12.5 L10.4 18.4 L18.6 5.8" stroke="#fff" stroke-width="3.1" stroke-linecap="round" stroke-linejoin="round" fill="none"/></svg>
<div class="t" style="left:1491.5px;top:1088.89px;font-size:19.5px;font-weight:400;color:#000;letter-spacing:0.5px;">Do not print or post</div>
<div class="t" style="right:513px;text-align:right;top:1123.29px;font-size:19.5px;font-weight:400;color:#000;">Posted:</div>
<div class="t" style="right:513px;text-align:right;top:1152.39px;font-size:19.5px;font-weight:400;color:#000;">Ledger Ref#:</div>
<svg style="left:1725.3px;top:899.7px" width="94.70000000000005" height="26" viewBox="0 0 94.70000000000005 26"><path d="M0 13 L26 0.2 V10 H94.70000000000005 V16 H26 V25.8 Z" fill="#469ef3"/></svg>
<svg style="left:1679.4px;top:1087.5px" width="94.39999999999986" height="26" viewBox="0 0 94.39999999999986 26"><path d="M0 13 L26 0.2 V10 H94.39999999999986 V16 H26 V25.8 Z" fill="#469ef3"/></svg>
</div></body></html>
